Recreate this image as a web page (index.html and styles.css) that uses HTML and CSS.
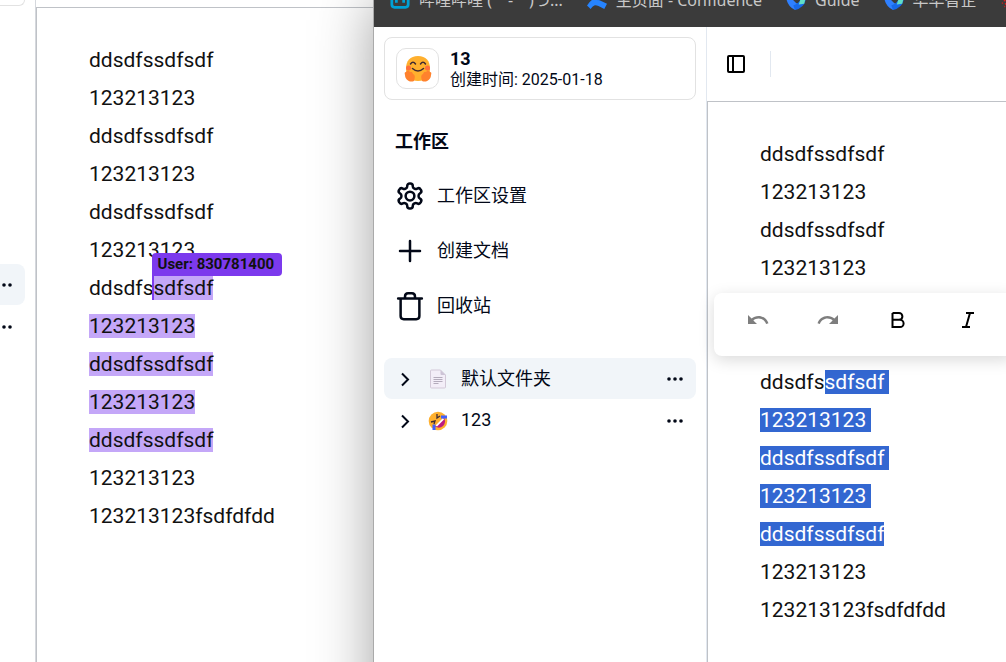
FILE: index.html
```html
<!DOCTYPE html>
<html lang="zh-CN">
<head>
<meta charset="utf-8">
<meta name="viewport" content="width=device-width, initial-scale=1">
<title>13</title>
<link rel="stylesheet" href="styles.css">
</head>
<body>
<div class="desktop">
  <section class="window window-back">
    <aside class="rail">
      <div class="rail-card"></div>
      <div class="rail-rows">
        <button class="rail-row active" aria-label="更多"><svg class="dots" viewBox="0 0 18 6"><circle cx="3" cy="3" r="1.800"/><circle cx="9" cy="3" r="1.800"/><circle cx="15" cy="3" r="1.800"/></svg></button>
        <button class="rail-row" aria-label="更多"><svg class="dots" viewBox="0 0 18 6"><circle cx="3" cy="3" r="1.800"/><circle cx="9" cy="3" r="1.800"/><circle cx="15" cy="3" r="1.800"/></svg></button>
      </div>
    </aside>
    <main class="page">
      <div class="header-end"></div>
      <article class="editor">
        <p>ddsdfssdfsdf</p>
        <p>123213123</p>
        <p>ddsdfssdfsdf</p>
        <p>123213123</p>
        <p>ddsdfssdfsdf</p>
        <p>123213123</p>
        <p>ddsdfs<span class="caret"><span class="caret-label">User: 830781400</span></span><span class="peer">sdfsdf</span></p>
        <p><span class="peer">123213123</span></p>
        <p><span class="peer">ddsdfssdfsdf</span></p>
        <p><span class="peer">123213123</span></p>
        <p><span class="peer">ddsdfssdfsdf</span></p>
        <p>123213123</p>
        <p>123213123fsdfdfdd</p>
      </article>
    </main>
  </section>

  <section class="window-front">
    <nav class="bookmarks">
      <a href="#"><svg class="mark" viewBox="0 0 22 22"><rect x="2" y="5" width="18" height="14" rx="3" fill="none" stroke="#00a1d6" stroke-width="3"/><path d="M7 10v4M15 10v4" stroke="#00a1d6" stroke-width="3"/></svg><span>哔哩哔哩 (゜-゜)つ...</span></a>
      <a href="#"><svg class="mark" viewBox="0 0 22 22"><path d="M0 17Q6 8 11 10L22 15L19 21Q11 16 8 17Q6 18 4 21Z" fill="#2684ff"/><path d="M21 4Q16 13 11 11L1 7L4 2L11 5Q14 5 17 1Z" fill="#1868db"/></svg><span>主页面 - Confluence</span></a>
      <a href="#"><svg class="mark" viewBox="0 0 22 22"><path d="M0 7Q1 18 10 22L15 16Q8 14 6 7Z" fill="#2f80ff"/><path d="M10 22Q22 19 22 7L16 10Q15 14 8 17Z" fill="#1769e8"/><path d="M22 7L16 10L14 16L20 15Z" fill="#62dfc5"/></svg><span>Guide</span></a>
      <a href="#"><svg class="mark" viewBox="0 0 22 22"><path d="M0 7Q1 18 10 22L15 16Q8 14 6 7Z" fill="#2f80ff"/><path d="M10 22Q22 19 22 7L16 10Q15 14 8 17Z" fill="#1769e8"/><path d="M22 7L16 10L14 16L20 15Z" fill="#62dfc5"/></svg><span>华华智企</span></a>
      <a href="#" aria-label="书签"><svg class="mark" viewBox="0 0 22 22"><circle cx="11" cy="10" r="5" fill="#f5222d"/><circle cx="11" cy="10" r="7" fill="none" stroke="#e02020" stroke-width="2" stroke-dasharray="2 2"/><circle cx="11" cy="10" r="10" fill="none" stroke="#c02020" stroke-width="1.500" stroke-dasharray="1.500 3"/></svg></a>
    </nav>
    <div class="app">
      <aside class="sidebar">
        <div class="space-card">
          <div class="avatar">
            <svg viewBox="0 0 28 28" class="hug"><path d="M14 1C22 1 26 6 26 13.500C26 22 22 26 14 26S2 22 2 13.500C2 6 6 1 14 1Z" fill="#ffb02e"/><circle cx="4.500" cy="13" r="2.500" fill="#ff6f3c"/><circle cx="23.500" cy="13" r="2.500" fill="#ff6f3c"/><path d="M6.500 9Q9 5.500 11.500 9M16.500 9Q19 5.500 21.500 9M8.500 13.500Q14 18.500 19.500 13.500" fill="none" stroke="#402a32" stroke-width="1.500" stroke-linecap="round"/><path d="M10 26C5 28 1 24 1 20Q0 17 2 17Q4 14 6 17Q8 16 9 19Q12 20 10 26ZM18 26C23 28 27 24 27 20Q28 17 26 17Q24 14 22 17Q20 16 19 19Q16 20 18 26Z" fill="#ff822d"/></svg>
          </div>
          <div class="space-info">
            <strong>13</strong>
            <span>创建时间: 2025-01-18</span>
          </div>
        </div>
        <h2>工作区</h2>
        <div class="menu">
          <button><svg class="icon" viewBox="0 0 24 24"><path d="M12.220 2h-.440a2 2 0 0 0-2 2v.180a2 2 0 0 1-1 1.730l-.430.250a2 2 0 0 1-2 0l-.150-.080a2 2 0 0 0-2.730.730l-.220.380a2 2 0 0 0 .730 2.730l.150.100a2 2 0 0 1 1 1.720v.510a2 2 0 0 1-1 1.740l-.150.090a2 2 0 0 0-.730 2.730l.220.380a2 2 0 0 0 2.730.730l.150-.080a2 2 0 0 1 2 0l.430.250a2 2 0 0 1 1 1.730V20a2 2 0 0 0 2 2h.440a2 2 0 0 0 2-2v-.180a2 2 0 0 1 1-1.730l.430-.250a2 2 0 0 1 2 0l.150.080a2 2 0 0 0 2.730-.730l.220-.390a2 2 0 0 0-.730-2.730l-.150-.080a2 2 0 0 1-1-1.740v-.500a2 2 0 0 1 1-1.740l.150-.090a2 2 0 0 0 .730-2.730l-.220-.380a2 2 0 0 0-2.730-.730l-.150.080a2 2 0 0 1-2 0l-.430-.250a2 2 0 0 1-1-1.730V4a2 2 0 0 0-2-2z"/><circle cx="12" cy="12" r="3.500"/></svg><span>工作区设置</span></button>
          <button><svg class="icon" viewBox="0 0 24 24"><path d="M4 12h16M12 4v16"/></svg><span>创建文档</span></button>
          <button><svg class="icon" viewBox="0 0 24 24"><path d="M2.500 6h19M4.500 6V20Q4.500 22.500 7 22.500h10Q19.500 22.500 19.500 20V6M8 5.500V4.500Q8 1.800 10.500 1.800h3Q16 1.800 16 4.500V5.500"/></svg><span>回收站</span></button>
        </div>
        <div class="tree">
          <div class="row active">
            <button class="chevron" aria-label="展开"><svg viewBox="0 0 20 20"><path d="M7 4.500l6 6-6 6"/></svg></button>
            <svg class="emoji" viewBox="0 0 20 20"><path d="M3.500 1h9L17.500 6v12q0 1-1 1h-13q-1 0-1-1V2q0-1 1-1Z" fill="#f3eef8" stroke="#d3c9d8"/><path d="M12.500 1v4q0 1 1 1h4Z" fill="#cdc4d6"/><path d="M5.500 8.500h9M5.500 10.500h9M5.500 12.500h9M5.500 14.500h5" stroke="#b4acbc"/></svg>
            <span class="name">默认文件夹</span>
            <button class="more" aria-label="更多"><svg class="dots" viewBox="0 0 18 6"><circle cx="3" cy="3" r="1.800"/><circle cx="9" cy="3" r="1.800"/><circle cx="15" cy="3" r="1.800"/></svg></button>
          </div>
          <div class="row">
            <button class="chevron" aria-label="展开"><svg viewBox="0 0 20 20"><path d="M7 4.500l6 6-6 6"/></svg></button>
            <svg class="emoji" viewBox="0 0 20 20"><circle cx="10" cy="10" r="9.300" fill="#ffb02e"/><path d="M7 15.500L16 6.500Q18.500 12 15 15T7 15.500Z" fill="#bb1d80"/><path d="M7.500 14.500L15 7l1 1.500L9 15.500Z" fill="#fff"/><path d="M3 11l4-1-1 3M9 3l0 4 3-2" fill="none" stroke="#402a32" stroke-width="1.300"/><path d="M13 4.500h6v3h-6ZM4.500 13.500h3v5.500h-3Z" fill="#3f5fff"/></svg>
            <span class="name">123</span>
            <button class="more" aria-label="更多"><svg class="dots" viewBox="0 0 18 6"><circle cx="3" cy="3" r="1.800"/><circle cx="9" cy="3" r="1.800"/><circle cx="15" cy="3" r="1.800"/></svg></button>
          </div>
        </div>
      </aside>
      <main class="page">
        <header class="header">
          <button class="toggle" aria-label="侧边栏"><svg viewBox="0 0 20 20"><rect x="2" y="2" width="16" height="16" rx="1"/><path d="M7 2v16"/></svg></button>
          <div class="divider"></div>
        </header>
        <article class="editor">
          <p>ddsdfssdfsdf</p>
          <p>123213123</p>
          <p>ddsdfssdfsdf</p>
          <p>123213123</p>
          <p>ddsdfssdfsdf</p>
          <p>123213123</p>
          <p>ddsdfs<span class="picked eol">sdfsdf</span></p>
          <p><span class="picked eol">123213123</span></p>
          <p><span class="picked eol">ddsdfssdfsdf</span></p>
          <p><span class="picked eol">123213123</span></p>
          <p><span class="picked">ddsdfssdfsdf</span></p>
          <p>123213123</p>
          <p>123213123fsdfdfdd</p>
          <div class="toolbar">
            <button disabled aria-label="撤销"><svg viewBox="0 0 24 24"><path d="M12.500 8c-2.650 0-5.050.990-6.900 2.600L2 7v9h9l-3.620-3.620c1.390-1.160 3.160-1.880 5.120-1.880 3.540 0 6.550 2.310 7.600 5.500l2.370-.780C21.080 11.030 17.150 8 12.500 8z"/></svg></button>
            <button disabled aria-label="重做"><svg viewBox="0 0 24 24"><path d="M18.400 10.600C16.550 8.990 14.150 8 11.500 8c-4.650 0-8.580 3.030-9.960 7.220L3.900 16c1.050-3.190 4.050-5.500 7.600-5.500 1.950 0 3.730.720 5.120 1.880L13 16h9V7l-3.600 3.600z"/></svg></button>
            <button aria-label="加粗"><svg viewBox="0 0 24 24"><path class="line" d="M6.500 5h6.500a3.400 3.400 0 0 1 0 6.800H6.500V5M6.500 11.800h7.500a3.600 3.600 0 0 1 0 7.200H6.500V11.800"/></svg></button>
            <button aria-label="斜体"><svg viewBox="0 0 24 24"><path class="line" d="M10 5h8M6 19h8M14 5l-4 14"/></svg></button>
          </div>
        </article>
      </main>
    </div>
  </section>
</div>
</body>
</html>
```
FILE: styles.css
```css
* { box-sizing: border-box; }
body {
  margin: 0;
  font-family: Roboto, "Noto Sans CJK SC", sans-serif;
  color: #020817;
}
button {
  border: 0;
  padding: 0;
  background: none;
  font: inherit;
  color: inherit;
}
p, h2 { margin: 0; }
svg { display: block; flex: none; }
.desktop {
  display: grid;
  grid-template-columns: 374px minmax(0, 1fr);
  height: 100vh;
  overflow: hidden;
}
.window { display: flex; background: #fff; min-width: 0; }
.window-front {
  position: relative;
  height: 120vh;
  background: #fff;
  box-shadow: 0 0 0 1px #aaa, 0 0 56px rgba(0, 0, 0, 0.38);
}

/* back window */
.rail { width: 35px; overflow: hidden; flex: none; }
.rail-card {
  height: 6px;
  width: 25px;
  border: 1px solid #e2e2e2;
  border-width: 0 1px 1px 0;
  border-bottom-right-radius: 8px;
}
.rail-rows { display: grid; gap: 1px; margin-top: 258px; }
.rail-row {
  display: flex;
  justify-content: flex-end;
  align-items: center;
  width: 25px;
  height: 41px;
  padding-right: 12px;
  border-radius: 0 8px 8px 0;
}
.active { background: #f1f5f9; }
.dots { width: 18px; height: 6px; fill: #020817; }
.header-end { height: 7px; }

/* document */
.page { flex: 1; min-width: 0; border-left: 1px solid #e2e8f0; }
.window-back .page { border-left-color: #d5d8dd; }
.editor {
  position: relative;
  border: 1px solid #bfc2c7;
  border-width: 1px 0 0 1px;
  padding: 33px 0 0 52px;
  height: 100%;
  color: #111;
  font-size: 21px;
  line-height: 38px;
}
.peer { background: #c4a7f8; }
.picked { background: #3367d1; color: #fff; }
.eol { padding-right: 5px; }
.caret {
  position: relative;
  border-left: 2px solid #7c3aed;
  margin: 0 0 0 -2px;
}
.caret-label {
  position: absolute;
  left: -2px;
  bottom: 24px;
  padding: 0 8px 0 6px;
  border-radius: 4px 4px 4px 0;
  background: #7c3aed;
  font-size: 15px;
  font-weight: 700;
  line-height: 23px;
  white-space: nowrap;
}

/* bookmarks bar */
.bookmarks {
  display: flex;
  align-items: flex-end;
  gap: 24px;
  height: 27px;
  padding: 0 0 16px 16px;
  background: #3b3b3b;
  overflow: hidden;
}
.bookmarks a {
  display: flex;
  align-items: center;
  gap: 9px;
  flex: none;
  color: #c8c8c8;
  font: 16px/22px "Noto Sans", "Noto Sans CJK SC", sans-serif;
  text-decoration: none;
  white-space: nowrap;
}
.mark { width: 20px; height: 20px; }

/* sidebar */
.app { display: flex; height: 100%; }
.sidebar { width: 332px; flex: none; padding: 10px; }
.space-card {
  display: flex;
  align-items: center;
  gap: 11px;
  height: 63px;
  padding: 0 11px;
  border: 1px solid #e2e2e2;
  border-radius: 8px;
}
.avatar {
  display: grid;
  place-items: center;
  width: 43px;
  height: 41px;
  border: 1px solid #e2e2e2;
  border-radius: 10px;
}
.hug { width: 28px; height: 28px; }
.space-info { display: grid; font-size: 16px; line-height: 21px; }
.space-info strong { font-size: 18px; }
h2 { margin: 28px 11px 0; font-size: 18px; line-height: 28px; }
.menu { display: grid; margin: 12px 11px 0; }
.menu button {
  display: flex;
  align-items: center;
  gap: 12px;
  height: 55px;
  font-size: 18px;
}
.menu span, .name { padding-bottom: 3px; }
.icon {
  width: 30px;
  height: 30px;
  fill: none;
  stroke: #020817;
  stroke-width: 2;
  stroke-linecap: round;
  stroke-linejoin: round;
}
.tree { display: grid; gap: 1px; margin-top: 25px; }
.row {
  display: flex;
  align-items: center;
  height: 41px;
  padding: 0 12px 0 11px;
  border-radius: 8px;
  font-size: 18px;
}
.chevron svg {
  width: 20px;
  height: 20px;
  fill: none;
  stroke: #020817;
  stroke-width: 2;
}
.emoji { width: 20px; height: 20px; margin: 0 13px 0 13px; }
.name { flex: 1; }

/* page header */
.header { display: flex; align-items: center; height: 74px; padding-left: 19px; }
.toggle svg { width: 20px; height: 20px; fill: none; stroke: #000; stroke-width: 2; }
.divider { width: 1px; height: 26px; margin-left: 24px; background: #e2e8f0; }

/* floating toolbar */
.toolbar {
  position: absolute;
  top: 191px;
  left: 6px;
  right: -8px;
  display: flex;
  gap: 46px;
  height: 63px;
  padding: 15px 32px;
  border-radius: 8px;
  background: #fff;
  box-shadow: 0 4px 16px rgba(0, 0, 0, 0.15);
}
.toolbar button { width: 24px; height: 24px; flex: none; }
.toolbar svg { width: 24px; height: 24px; fill: #000; }
.toolbar button:disabled { opacity: 0.5; }
.toolbar .line { fill: none; stroke: #000; stroke-width: 2; }
```
